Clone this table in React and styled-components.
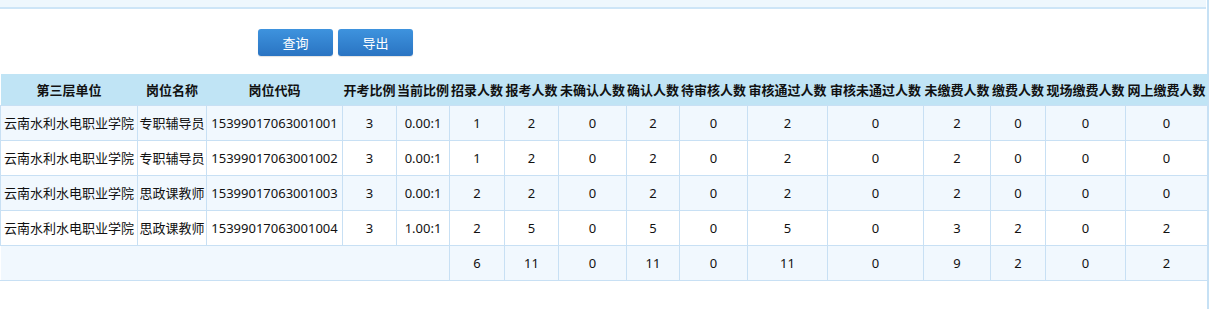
import React from "react";
import styled, { createGlobalStyle } from "styled-components";

const Global = createGlobalStyle`
  html, body { margin: 0; padding: 0; background: #fff; }
  body { font-family: "Noto Sans", "Noto Sans CJK SC", sans-serif; font-size: 13px; color: #111; }
`;

const Page = styled.div`
  width: 1207px;
  min-height: 309px;
  border-right: 2px solid #c6e1f5;
  display: flex;
  flex-direction: column;
`;

const TopBar = styled.div`
  width: 1206px;
  height: 7px;
  background: #eef7fd;
  border-bottom: 2px solid #cde5f7;
`;

const Toolbar = styled.div`
  display: flex;
  gap: 5px;
  padding: 20px 0 0 258px;
  height: 27px;
  margin-bottom: 18px;
`;

const Button = styled.button`
  width: 75px;
  height: 27px;
  border: none;
  border-radius: 3px;
  background: linear-gradient(to bottom, #3e93de, #2a74c2);
  color: #fff;
  font-family: "Noto Sans CJK SC", sans-serif;
  font-size: 13px;
  line-height: 27px;
  padding: 0;
  cursor: pointer;
  box-shadow: 0 1px 1px rgba(0, 0, 0, 0.12);
`;

const Table = styled.table`
  width: 1207px;
  table-layout: fixed;
  border-collapse: collapse;
`;

const Th = styled.th`
  height: 31px;
  padding: 0;
  background: #c0e4f5;
  font-family: "Noto Sans CJK SC", sans-serif;
  font-weight: bold;
  font-size: 13px;
  color: #111;
  white-space: nowrap;
  text-align: center;
  overflow: visible;
`;

const Tr = styled.tr`
  background: ${(p) => (p.$alt ? "#f1f8fe" : "#fff")};
`;

const Td = styled.td`
  height: 34px;
  padding: 0;
  border: 1px solid #c8e0f4;
  border-left-color: ${(p) => (p.$noLeft ? "transparent" : "#c8e0f4")};
  text-align: center;
  white-space: nowrap;
  font-size: 13px;
  color: #111;
  line-height: 18px;
`;

const widths = [137, 69, 136, 54, 53, 55, 54, 68, 53, 68, 80, 96, 67, 55, 80, 82];
const heads = [
  "第三层单位", "岗位名称", "岗位代码", "开考比例", "当前比例", "招录人数", "报考人数",
  "未确认人数", "确认人数", "待审核人数", "审核通过人数", "审核未通过人数", "未缴费人数",
  "缴费人数", "现场缴费人数", "网上缴费人数",
];
const rows = [
  ["云南水利水电职业学院", "专职辅导员", "15399017063001001", "3", "0.00:1", 1, 2, 0, 2, 0, 2, 0, 2, 0, 0, 0],
  ["云南水利水电职业学院", "专职辅导员", "15399017063001002", "3", "0.00:1", 1, 2, 0, 2, 0, 2, 0, 2, 0, 0, 0],
  ["云南水利水电职业学院", "思政课教师", "15399017063001003", "3", "0.00:1", 2, 2, 0, 2, 0, 2, 0, 2, 0, 0, 0],
  ["云南水利水电职业学院", "思政课教师", "15399017063001004", "3", "1.00:1", 2, 5, 0, 5, 0, 5, 0, 3, 2, 0, 2],
];
const totals = [6, 11, 0, 11, 0, 11, 0, 9, 2, 0, 2];

export default function App() {
  return (
    <>
      <Global />
      <Page>
        <TopBar />
        <Toolbar>
          <Button>查询</Button>
          <Button>导出</Button>
        </Toolbar>
        <Table>
          <colgroup>
            {widths.map((w, i) => (
              <col key={i} style={{ width: w }} />
            ))}
          </colgroup>
          <thead>
            <tr>
              {heads.map((h) => (
                <Th key={h}>{h}</Th>
              ))}
            </tr>
          </thead>
          <tbody>
            {rows.map((r, i) => (
              <Tr key={i} $alt={i % 2 === 0}>
                {r.map((c, j) => (
                  <Td key={j}>{c}</Td>
                ))}
              </Tr>
            ))}
            <Tr $alt>
              <Td colSpan={5} $noLeft />
              {totals.map((t, j) => (
                <Td key={j}>{t}</Td>
              ))}
            </Tr>
          </tbody>
        </Table>
      </Page>
    </>
  );
}
